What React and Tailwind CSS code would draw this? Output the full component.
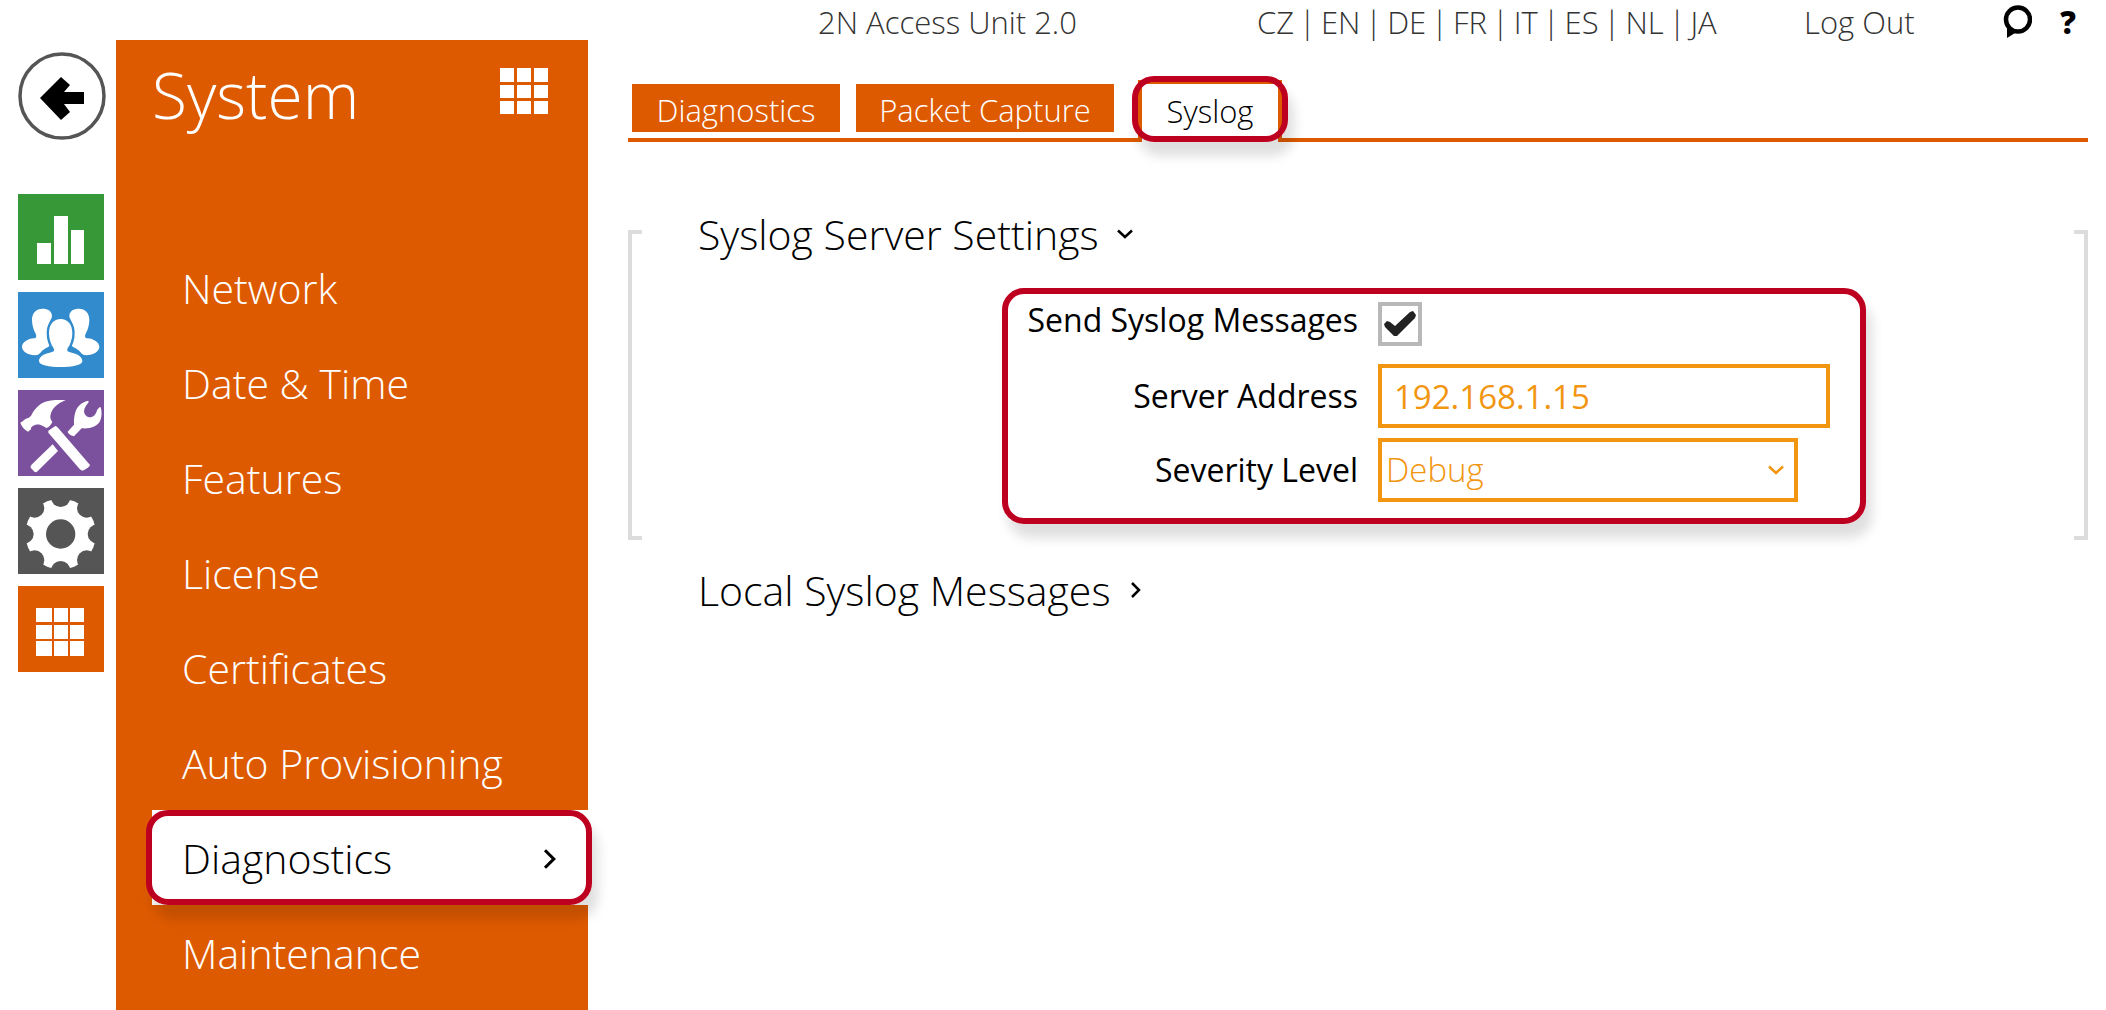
import { useState } from "react";

function Highlight({ className }) {
  return (
    <span
      aria-hidden="true"
      className={`pointer-events-none absolute border-6 border-[#be0020] shadow-[6px_14px_12px_rgba(0,0,0,0.13)] ${className}`}
    />
  );
}

function Chevron({ down, className = "" }) {
  return (
    <svg
      viewBox="0 0 16 16"
      aria-hidden="true"
      className={`size-4 shrink-0 fill-none stroke-current ${className}`}
      strokeWidth="2.5"
    >
      {down ? <path d="M1 4.500 8 11 15 4.500" /> : <path d="M4 1 11 8 4 15" />}
    </svg>
  );
}

function BarsIcon() {
  return (
    <svg viewBox="0 0 86 86" aria-hidden="true" className="size-full fill-white">
      <path d="M19 49h14v21H19zM36 22h14v48H36zM53 36h13v34H53z" />
    </svg>
  );
}

const sideFigure =
  "M73 50c17 0 29 7 29 23 0 8-13 18-13 48 0 18 8 25 8 34 0 10-13 11-23 20-6 6-10 13-16 14-24 3-46-10-46-25 0-13 18-24 35-25 9-1 9-7 6-14-7-13-11-27-11-42 0-20 13-33 31-33z";

function UsersIcon() {
  return (
    <svg viewBox="0 0 258 258" aria-hidden="true" className="size-full fill-white">
      <path d={sideFigure} />
      <path transform="translate(256 0) scale(-1 1)" d={sideFigure} />
      <path
        className="stroke-[#328bcc]"
        strokeWidth="14"
        paintOrder="stroke"
        d="M128 81c21 0 35 16 35 43 0 18-6 34-14 45-4 8 0 11 12 13 18 3 32 13 32 25 0 12-30 18-65 18s-65-6-65-18c0-12 14-22 32-25 12-2 16-5 12-13-8-11-14-27-14-45 0-27 14-43 35-43z"
      />
    </svg>
  );
}

function ToolsIcon() {
  return (
    <svg viewBox="0 0 258 258" aria-hidden="true" className="size-full fill-white">
      <path d="M143 31c-28-3-58-1-76 12-10 8-18 16-24 27-2 6-5 9-10 13-8 2-14 5-18 10l-8 5c4 12 12 20 23 27l9-7c-1-7 4-10 12-13 9-3 17-1 24 3l10 6c8-2 14-9 18-18-4-6-7-12-6-18 4-24 22-38 46-47z" />
      <path d="m91 122 21-14q4 0 8 5l96 112q0 6-22 17-6-1-9-5L91 128z" />
      <path d="m104 163 16 20-60 59q-6 6-10 4L38 233q-2-5 4-10z" />
      <path d="m149 125 19-21c-1-26 4-48 18-60 8-7 16-10 25-12l1 5c-8 9-13 17-14 27 0 9 6 16 15 18 12 1 20-6 24-21l7-9h4c4 12 4 29-2 42-9 16-28 23-55 21l-23 24q-18-6-19-14z" />
    </svg>
  );
}

const gearNotches = [
  [238, 138],
  [206, 216],
  [128, 248],
  [50, 216],
  [18, 138],
  [50, 60],
  [128, 28],
  [206, 60],
];

function GearIcon() {
  return (
    <svg viewBox="0 0 258 258" aria-hidden="true" className="size-full fill-[#555555]">
      <circle cx="128" cy="138" r="106" className="fill-white" />
      {gearNotches.map(([x, y]) => (
        <circle key={`${x}-${y}`} cx={x} cy={y} r="29" />
      ))}
      <circle cx="128" cy="138" r="44" />
    </svg>
  );
}

function GridIcon() {
  return (
    <svg viewBox="0 0 86 86" aria-hidden="true" className="size-full fill-white">
      <path d="M18 22h16v14H18zM36 22h14v14H36zM52 22h14v14H52zM18 39h16v14H18zM36 39h14v14H36zM52 39h14v14H52zM18 55h16v15H18zM36 55h14v15H36zM52 55h14v15H52z" />
    </svg>
  );
}

const sections = [
  { name: "Status", color: "bg-[#379837]", Icon: BarsIcon },
  { name: "Directory", color: "bg-[#328bcc]", Icon: UsersIcon },
  { name: "Hardware", color: "bg-[#7b519d]", Icon: ToolsIcon },
  { name: "Services", color: "bg-[#555555]", Icon: GearIcon },
  { name: "System", color: "bg-[#de5a00]", Icon: GridIcon },
];

const pages = [
  "Network",
  "Date & Time",
  "Features",
  "License",
  "Certificates",
  "Auto Provisioning",
  "Diagnostics",
  "Maintenance",
];

const languages = ["CZ", "EN", "DE", "FR", "IT", "ES", "NL", "JA"];

function Rail() {
  return (
    <nav aria-label="Sections" className="flex w-[116px] shrink-0 flex-col pt-[52px] pl-[18px]">
      <button type="button" aria-label="Back" className="size-[88px]">
        <svg viewBox="0 0 88 88" aria-hidden="true" className="size-full">
          <circle cx="44" cy="44" r="42" className="fill-white stroke-[#555555]" strokeWidth="3.5" />
          <path d="M22 46 43 25l9 8-6 7h20v12H46l6 8-9 8z" />
        </svg>
      </button>
      <ul className="mt-[54px] flex flex-col gap-3">
        {sections.map(({ name, color, Icon }) => (
          <li key={name}>
            <a href="#" aria-label={name} className={`block size-[86px] ${color}`}>
              <Icon />
            </a>
          </li>
        ))}
      </ul>
    </nav>
  );
}

function Sidebar() {
  return (
    <aside className="mt-10 w-[472px] shrink-0 bg-[#de5a00] text-white">
      <div className="flex h-[200px] items-start justify-between pr-10 pl-9">
        <h1 className="text-[64px] leading-[110px]">System</h1>
        <svg viewBox="0 0 48 46" aria-hidden="true" className="mt-7 h-[46px] w-12 fill-white">
          <path d="M0 0h14v14H0zM17 0h14v14H17zM34 0h14v14H34zM0 17h14v13H0zM17 17h14v13H17zM34 17h14v13H34zM0 33h14v13H0zM17 33h14v13H17zM34 33h14v13H34z" />
        </svg>
      </div>
      <ul>
        {pages.map((page) =>
          page === "Diagnostics" ? (
            <li key={page} className="relative ml-9 bg-white text-black">
              <a
                href="#"
                aria-current="page"
                className="flex h-[95px] items-center justify-between pt-[2px] pr-7 pl-[30px] text-[41px]"
              >
                {page}
                <Chevron className="size-5" />
              </a>
              <Highlight className="inset-y-0 -right-1 -left-[6px] rounded-[22px]" />
            </li>
          ) : (
            <li key={page}>
              <a href="#" className="flex h-[95px] items-center pt-[2px] pl-[66px] text-[41px]">
                {page}
              </a>
            </li>
          ),
        )}
      </ul>
    </aside>
  );
}

function TopBar() {
  return (
    <header className="flex h-11 items-center pr-[30px] pl-[230px] text-[31px] whitespace-nowrap text-[#333333]">
      <span className="w-[439px]">2N Access Unit 2.0</span>
      <nav aria-label="Languages" className="flex w-[547px] gap-[5px]">
        {languages.map((code, i) => (
          <span key={code} className="flex gap-[5px]">
            {i > 0 && <span>|</span>}
            <a href="#">{code}</a>
          </span>
        ))}
      </nav>
      <a href="#">Log Out</a>
      <div className="ml-auto flex items-center gap-7 text-black">
        <button type="button" aria-label="Feedback">
          <svg viewBox="0 0 30 34" aria-hidden="true" className="h-[34px] w-[30px]">
            <circle cx="16" cy="14.500" r="12" className="fill-none stroke-black" strokeWidth="4.500" />
            <path d="M5 21v12l8-5z" />
          </svg>
        </button>
        <button type="button" aria-label="Help" className="font-extrabold">
          ?
        </button>
      </div>
    </header>
  );
}

function Tabs() {
  return (
    <nav
      aria-label="Diagnostics pages"
      className="flex h-[62px] items-start gap-4 border-b-4 border-[#de5a00] pl-1 text-[31px] whitespace-nowrap"
    >
      <a href="#" className="mt-1 flex h-12 w-[208px] items-center justify-center bg-[#de5a00] pt-1 text-white">
        Diagnostics
      </a>
      <a href="#" className="mt-1 flex h-12 w-[258px] items-center justify-center bg-[#de5a00] pt-1 text-white">
        Packet Capture
      </a>
      <a
        href="#"
        aria-current="page"
        className="relative ml-2 flex h-[62px] w-36 items-center justify-center border-4 border-b-0 border-[#de5a00] bg-white pb-1 text-black"
      >
        Syslog
        <Highlight className="-inset-x-[10px] -top-2 bottom-0 rounded-[22px]" />
      </a>
    </nav>
  );
}

function SyslogForm() {
  const [enabled, setEnabled] = useState(true);
  const [address, setAddress] = useState("192.168.1.15");
  const [level, setLevel] = useState("Debug");
  return (
    <form className="relative mt-[38px] grid grid-cols-2 items-center gap-y-[10px] text-[32px] leading-10 font-normal text-black">
      <Highlight className="-top-[14px] -bottom-[22px] left-1/2 -ml-[356px] w-[864px] rounded-[22px]" />
      <label htmlFor="send" className="-mt-4 text-right">
        Send Syslog Messages
      </label>
      <div className="relative mb-2 ml-5 size-11">
        <input
          id="send"
          type="checkbox"
          checked={enabled}
          onChange={(e) => setEnabled(e.target.checked)}
          className="peer block size-11 appearance-none border-4 border-[#b8b8b8] bg-white"
        />
        <svg
          viewBox="0 0 44 44"
          aria-hidden="true"
          className="pointer-events-none invisible absolute inset-0 fill-[#222222] peer-checked:visible"
        >
          <path d="M6 22l3-3 3 1 5 4L32 10l3-1 3 4-1 3-18 18h-3L7 25z" />
        </svg>
      </div>
      <label htmlFor="address" className="text-right">
        Server Address
      </label>
      <input
        id="address"
        type="text"
        value={address}
        onChange={(e) => setAddress(e.target.value)}
        className="ml-5 h-16 w-[452px] border-4 border-[#f29510] bg-white px-3 text-[33px] text-[#f29510] outline-none"
      />
      <label htmlFor="level" className="text-right">
        Severity Level
      </label>
      <div className="relative ml-5 w-[420px]">
        <select
          id="level"
          value={level}
          onChange={(e) => setLevel(e.target.value)}
          className="block h-16 w-full appearance-none border-4 border-[#f29510] bg-white px-1 text-[33px] font-light text-[#f29510] outline-none"
        >
          <option>Debug</option>
          <option>Info</option>
          <option>Warning</option>
          <option>Error</option>
        </select>
        <Chevron down className="pointer-events-none absolute top-6 right-[14px] text-[#f29510]" />
      </div>
    </form>
  );
}

export default function App() {
  return (
    <div className="flex min-h-screen bg-white font-['Open_Sans','Noto_Sans',sans-serif] font-light">
      <Rail />
      <Sidebar />
      <div className="min-w-0 flex-1">
        <TopBar />
        <main className="pt-9 pr-[18px] pl-10">
          <Tabs />
          <section className="mt-[88px] grid grid-cols-[14px_1fr_14px]">
            <div className="border-4 border-r-0 border-[#dcdcdc]" />
            <div className="h-[310px]">
              <h2 className="-mt-[26px] ml-14 leading-[60px]">
                <button type="button" className="flex items-center gap-[18px] text-[41px]">
                  Syslog Server Settings
                  <Chevron down />
                </button>
              </h2>
              <SyslogForm />
            </div>
            <div className="border-4 border-l-0 border-[#dcdcdc]" />
          </section>
          <h2 className="mt-5 ml-[70px] leading-[60px]">
            <button type="button" className="flex items-center gap-[18px] text-[41px]">
              Local Syslog Messages
              <Chevron />
            </button>
          </h2>
        </main>
      </div>
    </div>
  );
}
